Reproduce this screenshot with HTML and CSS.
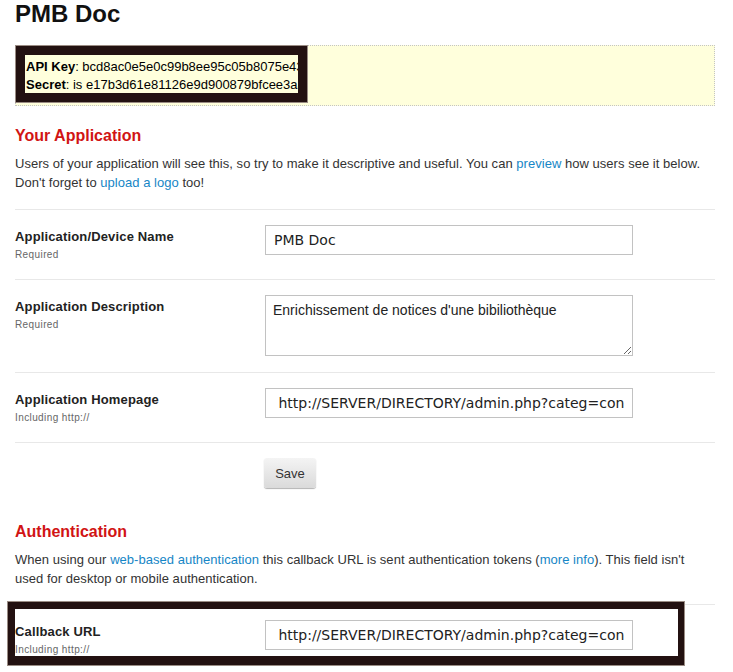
FILE: index.html
```html
<!DOCTYPE html>
<html lang="en">
<head>
<meta charset="utf-8">
<title>PMB Doc</title>
<link rel="stylesheet" href="styles.css">
</head>
<body>
<div class="page">
  <h1 class="title">PMB Doc</h1>

  <div class="keybox">
    <div class="keyframe">
      <div class="keytext">
        <div class="keyline"><b>API Key</b>: bcd8ac0e5e0c99b8ee95c05b8075e43</div>
        <div class="keyline"><b>Secret</b>: is e17b3d61e81126e9d900879bfcee3aa</div>
      </div>
    </div>
  </div>

  <h2 class="section-title">Your Application</h2>
  <p class="intro">Users of your application will see this, so try to make it descriptive and useful. You can <a href="#">preview</a> how users see it below. Don't forget to <a href="#">upload a logo</a> too!</p>

  <div class="form">
    <div class="row">
      <div class="label-col">
        <div class="label">Application/Device Name</div>
        <div class="hint">Required</div>
      </div>
      <input class="field" type="text" value="PMB Doc">
    </div>
    <div class="row">
      <div class="label-col">
        <div class="label">Application Description</div>
        <div class="hint">Required</div>
      </div>
      <textarea class="area">Enrichissement de notices d'une bibiliothèque</textarea>
    </div>
    <div class="row">
      <div class="label-col">
        <div class="label">Application Homepage</div>
        <div class="hint">Including http://</div>
      </div>
      <input class="field" type="text" value=" http://SERVER/DIRECTORY/admin.php?categ=con">
    </div>
    <div class="row actions">
      <div class="label-col"></div>
      <button class="btn" type="button">Save</button>
    </div>
  </div>

  <h2 class="section-title auth">Authentication</h2>
  <p class="intro">When using our <a href="#">web-based authentication</a> this callback URL is sent authentication tokens (<a href="#">more info</a>). This field isn't used for desktop or mobile authentication.</p>

  <div class="row callback">
    <div class="label-col">
      <div class="label">Callback URL</div>
      <div class="hint">Including http://</div>
    </div>
    <input class="field" type="text" value=" http://SERVER/DIRECTORY/admin.php?categ=con">
    <span class="highlight"></span>
  </div>
</div>
</body>
</html>
```

FILE: styles.css
```css
html, body {
  margin: 0;
  padding: 0;
  background: #fff;
}

body {
  font-family: "Liberation Sans", Arial, sans-serif;
  color: #333;
}

.page {
  padding: 0 18px 0 15px;
  width: 700px;
}

.title {
  margin: 0;
  font-size: 24px;
  line-height: 28px;
  font-weight: bold;
  color: #111;
}

.keybox {
  margin-top: 17px;
  border: 1px dotted #c4c4c4;
  background: #ffffdc;
  padding-bottom: 2px;
}

.keyframe {
  margin: -1px 0 0 -1px;
  width: 273px;
  height: 38px;
  border: 10px solid #231111;
  outline: 1px solid #9a8c84;
  outline-offset: -1px;
  overflow: hidden;
  white-space: nowrap;
}

.keytext {
  padding: 3px 0 0 1px;
  font-size: 13px;
  line-height: 18px;
  color: #000;
}

.section-title {
  margin: 20px 0 0;
  font-size: 16px;
  line-height: 20px;
  font-weight: bold;
  color: #d11414;
}

.section-title.auth {
  margin-top: 34px;
}

.intro {
  margin: 8px 0 0;
  max-width: 696px;
  font-size: 13px;
  line-height: 19px;
  letter-spacing: 0.03px;
  color: #333;
}

.intro a {
  color: #1686c6;
  text-decoration: none;
}

.form {
  margin-top: 17px;
}

.row {
  display: flex;
  align-items: flex-start;
  border-top: 1px solid #e8e8e8;
  padding: 15px 0;
}

.label-col {
  width: 250px;
  flex: none;
  padding-top: 4px;
}

.label {
  font-size: 13px;
  line-height: 16px;
  font-weight: bold;
  letter-spacing: 0.15px;
  color: #222;
}

.hint {
  margin-top: 3px;
  font-size: 10px;
  line-height: 14px;
  letter-spacing: 0.4px;
  color: #666;
}

.field {
  box-sizing: border-box;
  width: 368px;
  height: 30px;
  margin: 0 0 9px;
  padding: 0 8px;
  border: 1px solid #c2c2c2;
  border-radius: 0;
  font-family: "DejaVu Sans", sans-serif;
  font-size: 14px;
  color: #222;
  background: #fff;
}

.area {
  box-sizing: border-box;
  width: 368px;
  height: 61px;
  margin: 0 0 1px;
  padding: 6px 7px;
  border: 1px solid #c2c2c2;
  border-radius: 0;
  font-family: "Liberation Sans", Arial, sans-serif;
  font-size: 14px;
  color: #222;
  background: #fff;
}

.row.actions {
  padding-bottom: 0;
}

.row.actions .label-col {
  padding-top: 0;
  width: 249px;
}

.btn {
  width: 52px;
  height: 30px;
  padding: 0;
  border: 0;
  border-radius: 3px;
  background: linear-gradient(#f4f4f4, #dadada);
  box-shadow: 0 1px 1px rgba(0, 0, 0, 0.3);
  font-family: "Liberation Sans", Arial, sans-serif;
  font-size: 13px;
  color: #333;
}

.row.callback {
  position: relative;
  margin-top: 16px;
}

.highlight {
  position: absolute;
  left: -8px;
  top: -4px;
  width: 678px;
  height: 65px;
  box-sizing: border-box;
  border-style: solid;
  border-color: #231111;
  border-width: 8px 7px 10px 8px;
  outline: 1px solid #9a8c84;
  outline-offset: -1px;
  pointer-events: none;
}
```
